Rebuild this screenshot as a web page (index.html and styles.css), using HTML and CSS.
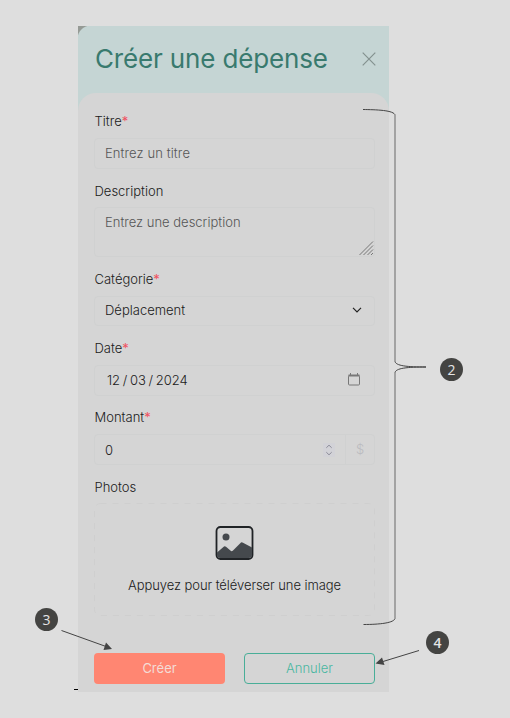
FILE: index.html
```html
<!DOCTYPE html>
<html lang="fr">
<head>
<meta charset="utf-8">
<title>Créer une dépense</title>
<link rel="stylesheet" href="styles.css">
</head>
<body>
<main class="panel">
  <header class="header">
    <h1>Créer une dépense</h1>
    <svg class="close" width="14" height="14" viewBox="0 0 14 14"><path d="M.7 .7 13.3 13.3M13.3 .7 .7 13.3"/></svg>
  </header>
  <form class="form">
    <section class="field">
      <label>Titre<b>*</b></label>
      <div class="input muted"><span class="t-title">Entrez un titre</span></div>
    </section>
    <section class="field field-desc">
      <label>Description</label>
      <div class="input area muted"><span>Entrez une description</span>
        <svg class="grip" width="15" height="15" viewBox="0 0 15 15"><path d="M.5 14 14 .5M4.5 14 14 4.5M8.5 14 14 8.5M12 14 14 12"/></svg>
      </div>
    </section>
    <section class="field">
      <label>Catégorie<b>*</b></label>
      <div class="input select"><span>Déplacement</span>
        <svg width="10" height="6" viewBox="0 0 10 6"><path d="M1 .8 5 4.8 9 .8"/></svg>
      </div>
    </section>
    <section class="field">
      <label>Date<b>*</b></label>
      <div class="input date"><span class="t-date">12 / 03 / 2024</span>
        <svg width="12" height="13" viewBox="0 0 12 13"><rect x=".5" y="2.5" width="11" height="9.500" rx="1"/><path d="M.5 2.500h11" stroke-width="2"/><path d="M2.500 0v3M9.500 0v3"/></svg>
      </div>
    </section>
    <section class="field">
      <label>Montant<b>*</b></label>
      <div class="input amount"><span>0</span>
        <svg width="12" height="14" viewBox="0 0 12 14"><path d="M3.3 4.8 6 2.2 8.7 4.8M3.3 9.2 6 11.8 8.7 9.2"/></svg>
        <i>$</i>
      </div>
    </section>
    <section class="field field-photos">
      <label>Photos</label>
      <div class="drop">
        <svg class="border" width="281" height="113"><rect x=".5" y=".5" width="280" height="112" rx="6"/></svg>
        <svg class="image" width="39" height="34" viewBox="0 0 39 34"><rect x="1.500" y="1" width="36" height="32" rx="4" fill="none" stroke="#202326" stroke-width="1.800"/><circle cx="11" cy="11" r="3.5"/><path d="M2 26.5 9 20.5Q10 20 11 20.8L16 25Q17 25.5 18 24.5L26 16.5Q27 16 28 16.7L37 21.5V29Q37 32 34 32H5Q2 32 2 29Z"/></svg>
        <p>Appuyez pour téléverser une image</p>
      </div>
    </section>
    <footer class="actions">
      <button type="button" class="create">Créer</button>
      <button type="button" class="cancel">Annuler</button>
    </footer>
  </form>
</main>
<svg class="notes" width="510" height="718" viewBox="0 0 510 718">
  <path class="thin" d="M363 109.5C375 109.7 395 110 395 115.500M395 361C395 366 408 367 426 367C408 367 395 368 395 373M395 618C395 623 379 624.500 363.500 624.500"/>
  <path class="rail" d="M395 114.500V361.500M395 372.500V619"/>
  <path class="thin" d="M61.500 630.500 106 646.500M419 650.500 383 661.500"/>
  <path class="tip" d="M112 649 103.500 650 106 642.500ZM375.500 663.500 382 657.500 384.500 665Z"/>
  <path class="dash" d="M74 689.500h4"/>
</svg>
<span class="badge b2">2</span>
<span class="badge b3">3</span>
<span class="badge b4">4</span>
</body>
</html>
```
FILE: styles.css
```css
* { box-sizing: border-box; }
body {
  margin: 0;
  width: 510px;
  height: 718px;
  padding: 26px 0 0 78px;
  position: relative;
  overflow: hidden;
  background: #dedede;
  color: #202020;
  font: 300 13px/20px Inter, "Liberation Sans", sans-serif;
}
svg { fill: none; stroke: #333; flex: none; }
.panel {
  width: 311px;
  height: 666px;
  background: radial-gradient(circle at 13px 13px, #c5d5d4 13px, #959a95 14px) 0 0 / 13px 13px no-repeat, #c5d5d4;
}
.header {
  height: 67px;
  padding: 0 13px 2px 17px;
  display: flex;
  align-items: center;
  justify-content: space-between;
}
h1 {
  margin: 0;
  font-weight: 400;
  font-size: 26px;
  line-height: 40px;
  letter-spacing: -.15px;
  color: #397a6e;
  white-space: nowrap;
}
.close { stroke: #84918f; stroke-width: 1.2; }
.form {
  height: 599px;
  padding: 18px 14px 0 16px;
  background: #d5d5d5;
  border-radius: 18px 18px 0 0;
}
.field { height: 70px; }
.field:nth-child(3), .field:nth-child(4) { height: 69px; }
.field-desc { height: 88px; }
label { display: block; height: 27px; padding-left: .5px; white-space: nowrap; }
.field-desc label, .field-photos label { height: 26px; }
label b { font-weight: 400; color: #f05261; }
.input {
  position: relative;
  height: 31px;
  padding: 0 10px 2px;
  display: flex;
  align-items: center;
  justify-content: space-between;
  border: 1px solid #d0d1d1;
  border-radius: 4px;
  white-space: nowrap;
}
.muted { color: #555; }
.t-title { letter-spacing: .1px; }
.area { height: 50px; padding-top: 4px; align-items: flex-start; }
.grip { position: absolute; right: 0; bottom: 0; stroke: #777; }
.select { height: 30px; padding-right: 12px; }
.select svg { stroke: #222; stroke-width: 1.2; }
.date { padding-left: 12px; padding-right: 14px; }
.t-date { word-spacing: -1px; }
.date svg { stroke: #777; }
.amount { padding: 0 0 0 10px; }
.amount svg { margin-left: auto; margin-right: 10px; stroke: #8c8c99; background: #d2d2d7; }
.amount i {
  width: 29px;
  height: 29px;
  line-height: 29px;
  text-align: center;
  font-style: normal;
  color: #bbbbc0;
  border-left: 1px solid #d0d1d1;
}
.field-photos { height: 176px; }
.drop {
  position: relative;
  height: 113px;
  padding-top: 23px;
  display: flex;
  flex-direction: column;
  align-items: center;
}
.border { position: absolute; inset: 0; stroke: #cfcfcf; stroke-dasharray: 6 6; }
.image { fill: #45494d; stroke: none; }
.drop p { margin: 15px 0 0; white-space: nowrap; letter-spacing: -.07px; }
.actions { display: flex; gap: 19px; }
.actions button {
  height: 31px;
  padding: 0;
  border-radius: 4px;
  font: 300 13px/20px Inter, "Liberation Sans", sans-serif;
}
.actions .create { width: 131px; border: 0; background: #ff8672; color: #f4dcd6; font-weight: 400; padding-bottom: 1px; }
.actions .cancel { width: 131px; border: 1px solid #49ae98; background: none; color: #49b7a1; padding-bottom: 1px; }
.notes { position: absolute; left: 0; top: 0; }
.thin { stroke: #444; stroke-width: 1; }
.rail { stroke: #a3a3a3; stroke-width: 2; }
.tip { fill: #444; stroke: none; }
.dash { stroke: #000; }
.badge {
  position: absolute;
  width: 23px;
  height: 23px;
  border-radius: 50%;
  background: #444442;
  color: #e5e5e5;
  font: 400 14px/23px "Open Sans", sans-serif;
  text-align: center;
}
.b2 { left: 440px; top: 358px; }
.b3 { left: 35px; top: 608px; }
.b4 { left: 426px; top: 631px; font-weight: 600; }
```
